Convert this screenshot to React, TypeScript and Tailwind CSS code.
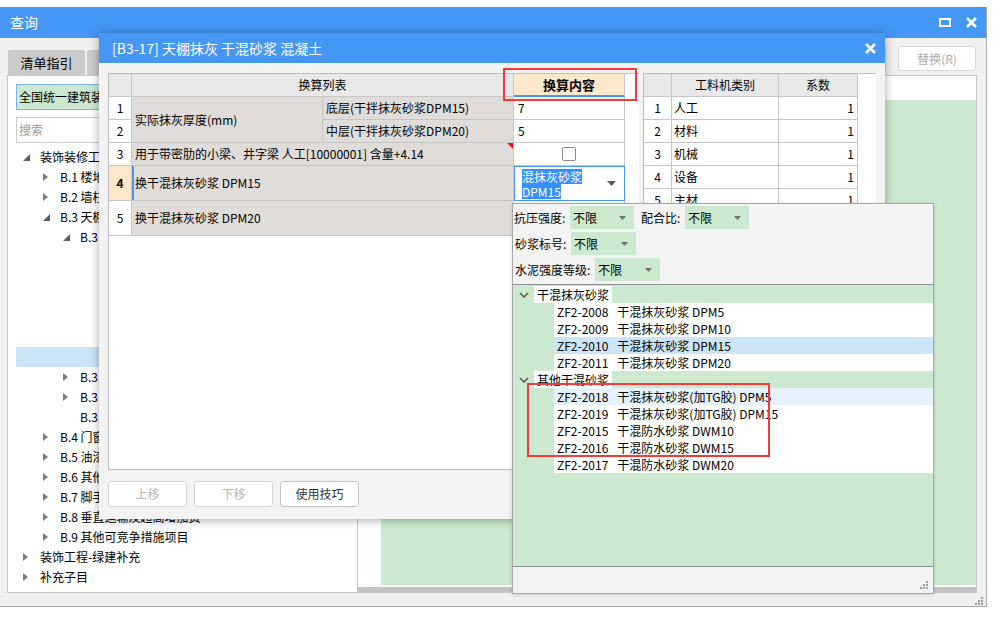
import React from 'react';

type TreeRow = { level: number; text: string; arrow?: 'open' | 'closed'; selected?: boolean };

const TREE: TreeRow[] = [
  { level: 0, text: '装饰装修工程', arrow: 'open' },
  { level: 1, text: 'B.1 楼地面工程', arrow: 'closed' },
  { level: 1, text: 'B.2 墙柱面工程', arrow: 'closed' },
  { level: 1, text: 'B.3 天棚工程', arrow: 'open' },
  { level: 2, text: 'B.3.1 天棚抹灰', arrow: 'open' },
  { level: 4, text: '' },
  { level: 4, text: '' },
  { level: 4, text: '' },
  { level: 4, text: '' },
  { level: 4, text: '' },
  { level: 4, text: '', selected: true },
  { level: 2, text: 'B.3.2 天棚吊顶', arrow: 'closed' },
  { level: 2, text: 'B.3.3 采光天棚', arrow: 'closed' },
  { level: 2, text: 'B.3.4 天棚其他装饰' },
  { level: 1, text: 'B.4 门窗工程', arrow: 'closed' },
  { level: 1, text: 'B.5 油漆、涂料、裱糊工程', arrow: 'closed' },
  { level: 1, text: 'B.6 其他工程', arrow: 'closed' },
  { level: 1, text: 'B.7 脚手架工程', arrow: 'closed' },
  { level: 1, text: 'B.8 垂直运输及超高增加费', arrow: 'closed' },
  { level: 1, text: 'B.9 其他可竞争措施项目', arrow: 'closed' },
  { level: 0, text: '装饰工程-绿建补充', arrow: 'closed' },
  { level: 0, text: '补充子目', arrow: 'closed' },
];

const MORTAR = [
  { group: '干混抹灰砂浆', items: [
    { code: 'ZF2-2008', name: '干混抹灰砂浆 DPM5' },
    { code: 'ZF2-2009', name: '干混抹灰砂浆 DPM10' },
    { code: 'ZF2-2010', name: '干混抹灰砂浆 DPM15', selected: true },
    { code: 'ZF2-2011', name: '干混抹灰砂浆 DPM20' },
  ] },
  { group: '其他干混砂浆', items: [
    { code: 'ZF2-2018', name: '干混抹灰砂浆(加TG胶) DPM5', hover: true },
    { code: 'ZF2-2019', name: '干混抹灰砂浆(加TG胶) DPM15' },
    { code: 'ZF2-2015', name: '干混防水砂浆 DWM10' },
    { code: 'ZF2-2016', name: '干混防水砂浆 DWM15' },
    { code: 'ZF2-2017', name: '干混防水砂浆 DWM20' },
  ] },
];

const KINDS = ['人工', '材料', '机械', '设备', '主材'];

function Collapsed() {
  return (
    <svg width="5" height="8" viewBox="0 0 5 8">
      <path d="M0 0 L5 4 L0 8 Z" fill="#7d7d7d" />
    </svg>
  );
}

function Expanded() {
  return (
    <svg width="7" height="7" viewBox="0 0 7 7">
      <path d="M7 0 L7 7 L0 7 Z" fill="#5f5f5f" />
    </svg>
  );
}

function Grip() {
  return (
    <svg width="8" height="8" viewBox="0 0 8 8" fill="#9a9a9a">
      <rect x="6" y="0" width="2" height="2" />
      <rect x="3" y="3" width="2" height="2" />
      <rect x="6" y="3" width="2" height="2" />
      <rect x="0" y="6" width="2" height="2" />
      <rect x="3" y="6" width="2" height="2" />
      <rect x="6" y="6" width="2" height="2" />
    </svg>
  );
}

function CloseIcon() {
  return (
    <svg width="11" height="11" viewBox="0 0 11 11">
      <path d="M1 1 L10 10 M10 1 L1 10" stroke="white" strokeWidth="2.6" />
    </svg>
  );
}

function FilterSelect({ width }: { width: string }) {
  return (
    <div className={`${width} h-full bg-[#cce8cf] flex items-center justify-between pl-[3px] pr-[8px]`}>
      <span>不限</span>
      <svg width="7" height="4" viewBox="0 0 7 4">
        <path d="M0 0 L7 0 L3.5 4 Z" fill="#707070" />
      </svg>
    </div>
  );
}

const cell = 'border-r border-b border-[#c6c6c6] flex items-center';

export default function App() {
  return (
    <div className="relative w-[997px] h-[617px] bg-white overflow-hidden font-['Noto_Sans_CJK_SC','Noto_Sans',sans-serif] text-[12px] text-black">
      {/* outer window */}
      <div className="absolute left-0 top-[7px] w-[987px] h-[600px] flex flex-col border-r border-b border-[#a9a9a9]">
        <div className="h-[31px] bg-[#4597f5] flex items-center justify-between pl-[10px] pr-[9px] text-white text-[14px]">
          <span>查询</span>
          <div className="flex items-center gap-[15px]">
            <svg width="12" height="9" viewBox="0 0 12 9">
              <rect x="1" y="1" width="10" height="7" fill="none" stroke="white" strokeWidth="2" />
            </svg>
            <CloseIcon />
          </div>
        </div>
        <div className="flex-1 bg-[#f0f0f0] flex flex-col">
          <div className="h-[37px] flex justify-between">
            <div className="flex items-end gap-[2px] pl-[8px]">
              <div className="w-[77px] h-[25px] bg-[#cbcbcb] rounded-t-[2px] flex items-center justify-center text-[13px]">清单指引</div>
              <div className="w-[77px] h-[25px] bg-[#cbcbcb] rounded-t-[2px] flex items-center justify-center text-[13px]">定额指引</div>
            </div>
            <div className="flex gap-[12px] pt-[8px] pr-[10px]">
              <div className="w-[78px] h-[25px] bg-white border border-[#d6d6d6] rounded-[3px] flex items-center justify-center text-[#ababab]">查询(Q)</div>
              <div className="w-[78px] h-[25px] bg-white border border-[#d6d6d6] rounded-[3px] flex items-center justify-center text-[#ababab]">替换(R)</div>
            </div>
          </div>
          <div className="flex h-[518px] pl-[7px]">
            <div className="w-[351px] bg-white border border-[#c8c8c8] pt-[8px] pl-[8px] pr-[8px] flex flex-col">
              <div className="h-[26px] bg-[#cce8cf] border border-[#7eb4ea] flex items-center pl-[2px] whitespace-nowrap overflow-hidden">全国统一建筑装饰装修工程消耗量定额</div>
              <div className="h-[26px] mt-[7px] bg-white border border-[#cccccc] flex items-center pl-[2px] text-[#9a9a9a]">搜索</div>
              <div className="mt-[4px] flex flex-col">
                {TREE.map((r, i) => (
                  <div
                    key={i}
                    className={`h-[20px] flex items-center whitespace-nowrap ${r.selected ? 'bg-[#cce4f7]' : ''}`}
                    style={{ paddingLeft: 7 + r.level * 20 }}
                  >
                    <span className="w-[17px] flex items-center">
                      {r.arrow === 'open' && <Expanded />}
                      {r.arrow === 'closed' && <Collapsed />}
                    </span>
                    <span>{r.text}</span>
                  </div>
                ))}
              </div>
            </div>
            <div className="w-[619px] bg-white border-y border-r border-[#c8c8c8] flex flex-col">
              <div className="h-[24px]" />
              <div className="flex-1 flex">
                <div className="w-[23px]" />
                <div className="flex-1 bg-[#cce8cf]" />
              </div>
              <div className="h-[2px]" />
              <div className="h-[5px] bg-[#c2c2c2]" />
            </div>
          </div>
          <div className="flex-1 flex justify-end items-end pr-[3px] pb-[1px]">
            <Grip />
          </div>
        </div>
      </div>

      {/* conversion dialog */}
      <div className="absolute left-[99px] top-[33px] w-[786px] h-[486px] flex flex-col bg-[#f3f3f3] shadow-[0_1px_9px_rgba(0,0,0,0.35)]">
        <div className="h-[30px] bg-[#4597f5] flex items-center justify-between pl-[13px] pr-[9px] text-white text-[14px]">
          <span>[B3-17] 天棚抹灰 干混砂浆 混凝土</span>
          <CloseIcon />
        </div>
        <div className="flex-1 px-[9px] pt-[10px]">
          <div className="flex gap-[4px] h-[397px]">
            <div className="w-[531px] bg-white border-t border-l border-b border-[#bdbdbd]">
              <div className="grid grid-cols-[23px_191px_191px_111px] grid-rows-[23px_23px_23px_23px_35px_35px]">
                <div className={`${cell} bg-[#e8e8e8]`} />
                <div className={`${cell} col-span-2 bg-[#e8e8e8] justify-center`}>换算列表</div>
                <div className={`${cell} bg-[#fde8cc] justify-center font-bold text-[13px] border-b-2 border-b-[#4597f5]`}>换算内容</div>

                <div className={`${cell} justify-center`}>1</div>
                <div className={`${cell} row-span-2 bg-[#e0dcd9] pl-[3px]`}>实际抹灰厚度(mm)</div>
                <div className={`${cell} bg-[#e0dcd9] pl-[3px]`}>底层(干拌抹灰砂浆DPM15)</div>
                <div className={`${cell} pl-[4px]`}>7</div>

                <div className={`${cell} justify-center`}>2</div>
                <div className={`${cell} bg-[#e0dcd9] pl-[3px]`}>中层(干拌抹灰砂浆DPM20)</div>
                <div className={`${cell} pl-[4px]`}>5</div>

                <div className={`${cell} justify-center`}>3</div>
                <div className={`${cell} col-span-2 bg-[#e0dcd9] pl-[3px] relative`}>
                  用于带密肋的小梁、井字梁 人工[10000001] 含量+4.14
                  <svg className="absolute right-0 top-0" width="6" height="6" viewBox="0 0 6 6">
                    <path d="M0 0 L6 0 L6 6 Z" fill="#ee1111" />
                  </svg>
                </div>
                <div className={`${cell} justify-center`}>
                  <div className="w-[14px] h-[14px] border border-[#8a8a8a] rounded-[2px] bg-white" />
                </div>

                <div className={`${cell} justify-center bg-[#fde7c9] font-bold`}>4</div>
                <div className={`${cell} col-span-2 bg-[#e0dcd9] pl-[3px] shadow-[inset_2px_0_0_#4597f5]`}>换干混抹灰砂浆 DPM15</div>
                <div className="border border-[#4597f5] flex items-center justify-between pl-[7px] pr-[8px]">
                  <div className="flex flex-col items-start leading-[15px] text-white">
                    <span className="bg-[#3390ff]">混抹灰砂浆</span>
                    <span className="bg-[#3390ff]">DPM15</span>
                  </div>
                  <svg width="9" height="5" viewBox="0 0 9 5">
                    <path d="M0 0 L9 0 L4.5 5 Z" fill="#5a5a5a" />
                  </svg>
                </div>

                <div className={`${cell} justify-center`}>5</div>
                <div className={`${cell} col-span-2 bg-[#e0dcd9] pl-[3px]`}>换干混抹灰砂浆 DPM20</div>
                <div className={cell} />
              </div>
            </div>
            <div className="w-[233px] bg-white border-t border-l border-b border-[#bdbdbd]">
              <div className="grid grid-cols-[28px_107px_79px] grid-rows-[23px_23px_23px_23px_23px_23px]">
                <div className={`${cell} bg-[#e8e8e8]`} />
                <div className={`${cell} bg-[#e8e8e8] justify-center`}>工料机类别</div>
                <div className={`${cell} bg-[#e8e8e8] justify-center`}>系数</div>
                {KINDS.map((k, i) => (
                  <React.Fragment key={k}>
                    <div className={`${cell} justify-center`}>{i + 1}</div>
                    <div className={`${cell} pl-[2px]`}>{k}</div>
                    <div className={`${cell} justify-end pr-[3px]`}>1</div>
                  </React.Fragment>
                ))}
              </div>
            </div>
          </div>
          <div className="flex gap-[7px] mt-[11px]">
            <div className="w-[79px] h-[26px] bg-white border border-[#d4d4d4] rounded-[3px] flex items-center justify-center text-[#b9b9b9]">上移</div>
            <div className="w-[79px] h-[26px] bg-white border border-[#d4d4d4] rounded-[3px] flex items-center justify-center text-[#b9b9b9]">下移</div>
            <div className="w-[79px] h-[26px] bg-white border border-[#c4c4c4] rounded-[3px] flex items-center justify-center text-[#333]">使用技巧</div>
          </div>
        </div>
      </div>

      {/* mortar dropdown */}
      <div className="absolute left-[512px] top-[203px] w-[422px] h-[391px] bg-[#f3f3f3] border border-[#a6a6a6] shadow-[0_1px_4px_rgba(0,0,0,0.15)] flex flex-col">
        <div className="flex flex-col gap-[3px] pt-[2px] pl-[1px]">
          <div className="h-[23px] flex items-center">
            <span className="w-[56px]">抗压强度:</span>
            <FilterSelect width="w-[64px]" />
            <span className="w-[51px] pl-[7px]">配合比:</span>
            <FilterSelect width="w-[64px]" />
          </div>
          <div className="h-[23px] flex items-center pl-[1px]">
            <span className="w-[56px]">砂浆标号:</span>
            <FilterSelect width="w-[65px]" />
          </div>
          <div className="h-[23px] flex items-center pl-[1px]">
            <span className="w-[80px]">水泥强度等级:</span>
            <FilterSelect width="w-[65px]" />
          </div>
        </div>
        <div className="mt-[3px] h-[283px] bg-[#cce8cf] border-y border-[#8c9094] pt-[1px] flex flex-col">
          {MORTAR.map((g) => (
            <React.Fragment key={g.group}>
              <div className="h-[17px] flex items-center">
                <span className="w-[21px] flex justify-center">
                  <svg width="10" height="6" viewBox="0 0 10 6">
                    <path d="M1 1 L5 5 L9 1" fill="none" stroke="#555" strokeWidth="1.5" />
                  </svg>
                </span>
                <span className="bg-white px-[3px] h-full flex items-center">{g.group}</span>
              </div>
              {g.items.map((it) => (
                <div
                  key={it.code}
                  className={`h-[17px] ml-[41px] flex items-center pl-[3px] whitespace-nowrap ${
                    it.selected ? 'bg-[#cce4f7]' : it.hover ? 'bg-[#e5f1fb]' : 'bg-white'
                  }`}
                >
                  <span className="mr-[9px]">{it.code}</span>
                  <span>{it.name}</span>
                </div>
              ))}
            </React.Fragment>
          ))}
        </div>
        <div className="flex-1 flex justify-end items-end pr-[5px] pb-[4px]">
          <Grip />
        </div>
      </div>

      {/* annotation boxes */}
      <div className="absolute left-[503px] top-[68px] w-[134px] h-[33px] border-2 border-[#f23a3a]" />
      <div className="absolute left-[527px] top-[383px] w-[243px] h-[74px] border-2 border-[#f23a3a]" />
    </div>
  );
}
